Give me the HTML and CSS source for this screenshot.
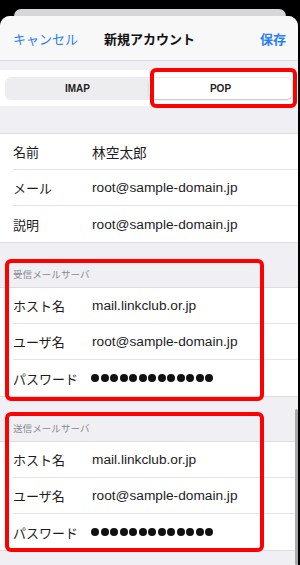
FILE: index.html
```html
<!DOCTYPE html>
<html lang="ja">
<head>
    <meta charset="UTF-8">
    <meta name="viewport" content="width=device-width, initial-scale=1.0">
    <title>新規アカウント</title>
    <link rel="stylesheet" href="styles.css">
</head>
<body>
    <div class="back-card"></div>
    <div class="sheet">
        <div class="nav">
            <span class="nav-btn">キャンセル</span>
            <span class="nav-title">新規アカウント</span>
            <span class="nav-btn nav-save">保存</span>
        </div>

        <div class="segment-band">
            <div class="segment">
                <span class="seg-item">IMAP</span>
                <span class="seg-item selected">POP</span>
            </div>
        </div>

        <div class="group first">
            <div class="row"><span class="label">名前</span><span class="value">林空太郎</span></div>
            <div class="row"><span class="label">メール</span><span class="value">root@sample-domain.jp</span></div>
            <div class="row"><span class="label">説明</span><span class="value">root@sample-domain.jp</span></div>
        </div>

        <div class="section-header">受信メールサーバ</div>
        <div class="group">
            <div class="row"><span class="label">ホスト名</span><span class="value">mail.linkclub.or.jp</span></div>
            <div class="row"><span class="label">ユーザ名</span><span class="value">root@sample-domain.jp</span></div>
            <div class="row"><span class="label">パスワード</span><span class="dots"><i></i><i></i><i></i><i></i><i></i><i></i><i></i><i></i><i></i><i></i><i></i><i></i><i></i></span></div>
        </div>

        <div class="section-header">送信メールサーバ</div>
        <div class="group">
            <div class="row"><span class="label">ホスト名</span><span class="value">mail.linkclub.or.jp</span></div>
            <div class="row"><span class="label">ユーザ名</span><span class="value">root@sample-domain.jp</span></div>
            <div class="row"><span class="label">パスワード</span><span class="dots"><i></i><i></i><i></i><i></i><i></i><i></i><i></i><i></i><i></i><i></i><i></i><i></i><i></i></span></div>
        </div>
    </div>

    <!-- 注釈の赤枠 -->
    <div class="mark mark-pop"></div>
    <div class="mark mark-in"></div>
    <div class="mark mark-out"></div>
    <div class="scrollbar"></div>
</body>
</html>
```

FILE: styles.css
```css
body {
    margin: 0;
    padding: 0;
    width: 300px;
    height: 565px;
    overflow: hidden;
    background-color: #000;
    font-family: "Liberation Sans", "Noto Sans CJK JP", sans-serif;
    color: #1c1c1e;
    position: relative;
}
.back-card {
    margin: 9px 14px 0 14px;
    height: 7px;
    background-color: #d7d7d9;
    border-top-left-radius: 8px;
    border-top-right-radius: 8px;
}
.sheet {
    width: 298px;
    height: 549px;
    background-color: #efeff4;
    border-top-left-radius: 10px;
    border-top-right-radius: 10px;
    overflow: hidden;
}
.nav {
    height: 44px;
    background-color: #f8f8f8;
    border-bottom: 1px solid #dcdcdf;
    display: grid;
    grid-template-columns: 1fr auto 1fr;
    align-items: center;
    padding: 0 12px 0 13px;
    font-family: "Noto Sans CJK JP", sans-serif;
    font-size: 13px;
}
.nav-btn {
    color: #2b7ef6;
}
.nav-title {
    font-weight: bold;
    color: #111;
}
.nav-save {
    justify-self: end;
    font-weight: bold;
}
.segment-band {
    margin-top: 9px;
    height: 36px;
    background-color: #fff;
    padding: 7px 5px 0 5px;
    box-sizing: border-box;
}
.segment {
    height: 23px;
    background-color: #ededef;
    border-radius: 6px;
    display: flex;
    padding: 1px;
    box-sizing: border-box;
}
.seg-item {
    flex: 1;
    display: flex;
    align-items: center;
    justify-content: center;
    font-size: 10px;
    font-weight: bold;
    color: #222;
    border-radius: 5px;
}
.seg-item.selected {
    background-color: #fff;
    box-shadow: 0 1px 2px rgba(0, 0, 0, 0.18);
}
.group {
    background-color: #fff;
    border-top: 1px solid #dcdcdf;
    border-bottom: 1px solid #dcdcdf;
}
.group.first {
    margin-top: 27px;
}
.row {
    height: 36px;
    margin-left: 13px;
    border-bottom: 1px solid #e3e3e6;
    box-sizing: border-box;
    display: flex;
    align-items: center;
}
.row:last-child {
    border-bottom: none;
}
.label {
    width: 79px;
    font-family: "Noto Sans CJK JP", sans-serif;
    font-size: 13px;
}
.value {
    font-size: 13.7px;
}
.row .value:first-of-type {
    font-family: "Liberation Sans", "Noto Sans CJK JP", sans-serif;
}
.dots {
    display: flex;
    gap: 1.5px;
    margin-left: -1px;
}
.dots i {
    width: 8px;
    height: 8px;
    border-radius: 50%;
    background-color: #111;
}
.section-header {
    height: 44px;
    box-sizing: border-box;
    padding: 0 0 6px 13px;
    display: flex;
    align-items: flex-end;
    font-family: "Noto Sans CJK JP", sans-serif;
    font-size: 9.6px;
    color: #8a8a8e;
}
.mark {
    position: absolute;
    border: 4px solid #ff0000;
    border-radius: 6px;
    box-sizing: border-box;
}
.mark-pop {
    left: 150px;
    top: 68px;
    width: 147px;
    height: 40px;
}
.mark-in {
    left: 5px;
    top: 259px;
    width: 259px;
    height: 142px;
}
.mark-out {
    left: 5px;
    top: 412px;
    width: 259px;
    height: 140px;
}
.scrollbar {
    position: absolute;
    left: 295px;
    top: 409px;
    width: 2.5px;
    height: 156px;
    background-color: #a8a8ab;
    border-radius: 2px;
}
```
